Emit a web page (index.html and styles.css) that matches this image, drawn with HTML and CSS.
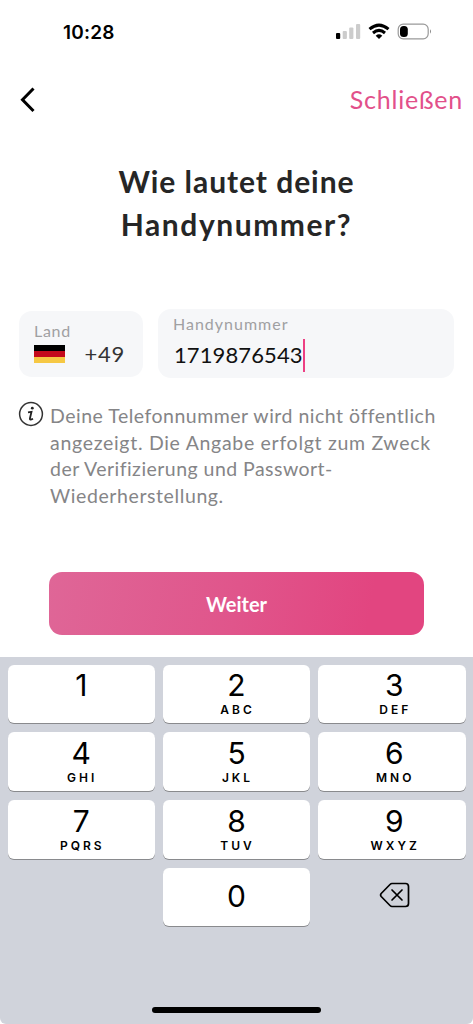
FILE: index.html
```html
<!DOCTYPE html>
<html lang="de">
<head>
<meta charset="utf-8">
<meta name="viewport" content="width=device-width">
<title>Handynummer</title>
<link rel="stylesheet" href="styles.css">
</head>
<body>
<div class="screen">
  <header class="status">
    <span class="time">10:28</span>
    <svg class="status-icons" width="98" height="20" viewBox="0 0 98 20">
      <rect x="0" y="10" width="4.2" height="6" rx="1" fill="#000"/>
      <g fill="#ccc"><rect x="6.7" y="8" width="4.2" height="8" rx="1"/><rect x="13.2" y="4.5" width="4.2" height="11.500" rx="1"/><rect x="20" y="1" width="4.200" height="15" rx="1"/></g>
      <g fill="none" stroke="#000" stroke-width="3"><path d="M33.500 6.200Q43 -2 52.500 6.200"/><path d="M37 10Q43 4.800 49 10"/></g>
      <path d="M39.700 12.700Q43 10 46.300 12.700L43 16Z" fill="#000"/>
      <rect x="62.200" y="1.200" width="30" height="14.600" rx="5" fill="none" stroke="#999" stroke-width="1.200"/>
      <rect x="64" y="3" width="7.800" height="11" rx="3.500" fill="#000"/>
      <path d="M94 6.300Q96 8.500 94 10.700Z" fill="#888"/>
    </svg>
  </header>
  <nav class="nav">
    <svg class="back" width="18" height="28" viewBox="0 0 18 28"><path d="M15.500 2.500L4.500 13.700L15.500 25" fill="none" stroke="#000" stroke-width="3"/></svg>
    <span class="close">Schließen</span>
  </nav>
  <h1 class="title"><span class="title-a">Wie lautet deine</span><br><span class="title-b">Handynummer?</span></h1>
  <section class="fields">
    <div class="field country">
      <span class="label land">Land</span>
      <div class="prefix">
        <svg width="31" height="18" viewBox="0 0 31 18"><path fill="#000" d="M0 0h31v6H0z"/><path fill="#c40a1c" d="M0 6h31v6H0z"/><path fill="#f6c844" d="M0 12h31v6H0z"/></svg>
        <span class="code">+49</span>
      </div>
    </div>
    <div class="field phone">
      <span class="label">Handynummer</span>
      <div class="entry"><span class="number">1719876543</span><i class="caret"></i></div>
    </div>
  </section>
  <section class="info">
    <svg width="26" height="26" viewBox="0 0 26 26"><circle cx="13" cy="13" r="11.400" fill="none" stroke="#333" stroke-width="1.500"/><circle cx="14.300" cy="7.200" r="1.400" fill="#222"/><path d="M10 11.300L13.500 10.800L11.900 17.500Q11.600 19.600 15 17.700" fill="none" stroke="#222" stroke-width="1.800"/></svg>
    <p class="info-text"><span class="l1">Deine Telefonnummer wird nicht öffentlich</span><br><span class="l2">angezeigt. Die Angabe erfolgt zum Zweck</span><br><span class="l3">der Verifizierung und Passwort-</span><br><span class="l4">Wiederherstellung.</span></p>
  </section>
  <button class="submit">Weiter</button>
  <section class="keyboard">
    <div class="keys">
      <div class="key"><b>1</b></div><div class="key"><b>2</b><small>ABC</small></div><div class="key right"><b>3</b><small>DEF</small></div>
      <div class="key mid"><b>4</b><small>GHI</small></div><div class="key mid"><b>5</b><small>JKL</small></div><div class="key mid right"><b>6</b><small>MNO</small></div>
      <div class="key mid"><b>7</b><small>PQRS</small></div><div class="key mid"><b>8</b><small>TUV</small></div><div class="key mid right"><b>9</b><small>WXYZ</small></div>
      <div></div><div class="key zero"><b>0</b></div>
      <div class="delete"><svg width="32" height="26" viewBox="0 0 32 26"><g fill="none" stroke="#000" stroke-width="1.700" stroke-linejoin="round" stroke-linecap="round"><path d="M13 1.500H26.500Q29.500 1.500 29.500 4.500V21.500Q29.500 24.500 26.500 24.500H13Q12 24.500 11 23.500L2.200 14.500Q1 13 2.200 11.500L11 2.500Q12 1.500 13 1.500Z"/><path d="M13 8L23 18M23 8L13 18"/></g></svg></div>
    </div>
    <div class="home"></div>
  </section>
</div>
</body>
</html>
```
FILE: styles.css
```css
* { box-sizing: border-box; }
body { margin: 0; background: #fff; font-family: Lato, "Open Sans", sans-serif; }
.screen { width: 473px; height: 1024px; overflow: hidden; display: flex; flex-direction: column; }
.status { height: 65px; flex: none; display: flex; justify-content: space-between; padding: 21px 39px 0 63px; align-items: flex-start; }
.time { font: 600 19px/24px Inter, sans-serif; letter-spacing: 0.2px; color: #000; }
.status-icons { margin-top: 2px; }
.nav { height: 70px; flex: none; display: flex; justify-content: space-between; align-items: center; padding: 0 10px 0 18px; }
.close { font-size: 25px; line-height: 30px; letter-spacing: 0.8px; color: #e2508a; margin-bottom: 2px; }
.title { margin: 25px 0 0; height: 149px; flex: none; text-align: center; font-size: 30px; line-height: 42.5px; font-weight: 700; color: #262626; white-space: nowrap; }
.title-a { letter-spacing: 0.95px; }
.title-b { letter-spacing: 1.55px; }
.fields { display: flex; gap: 15px; padding-left: 19px; height: 69px; flex: none; align-items: center; }
.field { background: #f6f7f9; border-radius: 13px; }
.country { width: 124px; height: 66px; padding: 10px 15px 0; }
.phone { width: 296px; height: 69px; padding: 5px 15px 0; }
.label { display: block; font-size: 16px; line-height: 20px; letter-spacing: 1px; color: #a0a0a2; }
.land { letter-spacing: 0.7px; }
.prefix { display: flex; align-items: center; justify-content: space-between; height: 26px; padding-right: 3px; }
.code, .number { font-size: 22px; line-height: 26px; color: #333; }
.code { letter-spacing: 0.7px; }
.number { color: #111; letter-spacing: 0.1px; padding: 0 0 0 1px; }
.entry { display: flex; align-items: center; height: 34px; margin-top: 4px; }
.caret { width: 2.5px; height: 33px; background: #ed4084; }
.info { display: flex; gap: 6px; padding: 23px 0 0 18px; height: 194px; flex: none; align-items: flex-start; }
.info-text { margin: 2px 0 0; font-size: 19.500px; line-height: 26.500px; color: #858587; white-space: nowrap; }
.l1 { letter-spacing: 0.5px; }
.l2 { letter-spacing: 0.7px; }
.l3 { letter-spacing: 0.46px; }
.l4 { letter-spacing: 0.6px; }
.submit { width: 375px; height: 63px; flex: none; margin: 0 0 0 49px; padding: 0; border: 0; border-radius: 13px; background: linear-gradient(100deg, #df6697, #e0558b 50%, #e24580 85%, #e24580); color: #fff; font: 700 20px/24px Lato, sans-serif; }
.keyboard { margin-top: 22px; height: 367px; flex: none; background: #d0d3db; border-radius: 0 0 6px 6px; display: flex; flex-direction: column; align-items: center; }
.keys { display: grid; grid-template-columns: repeat(3, 147.500px); grid-template-rows: 58px 59px 59px 58px; column-gap: 7.750px; row-gap: 9px; padding-top: 7.500px; height: 350px; }
.key { background: #fff; border-radius: 6px; box-shadow: 0 1px 0.500px #898a8d; display: flex; flex-direction: column; align-items: center; padding-top: 2px; }
.key.mid { padding-top: 3px; }
.key.right { padding-left: 5px; }
.key b { font: 400 30px/36px Inter, sans-serif; color: #000; }
.key small { font: 600 12px/14px Inter, sans-serif; letter-spacing: 3px; padding-left: 2px; color: #000; }
.key.zero { justify-content: center; padding: 0 0 2px; }
.delete { display: flex; align-items: center; justify-content: center; padding: 0 0 3px 6px; }
.home { width: 169px; height: 6px; border-radius: 3px; background: #000; }
```
